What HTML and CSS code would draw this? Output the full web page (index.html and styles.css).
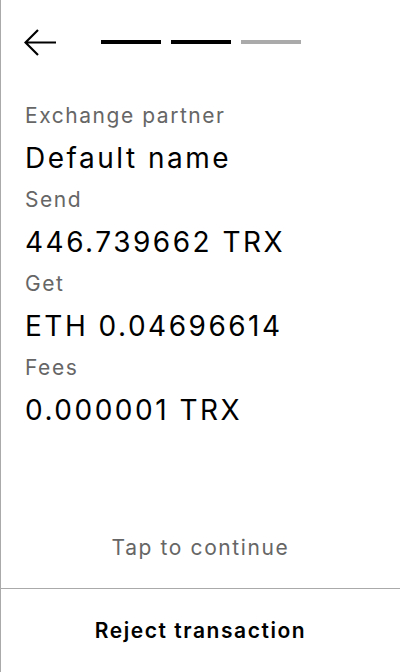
FILE: index.html
```html
<!DOCTYPE html>
<html>
<head>
<meta charset="utf-8">
<link rel="stylesheet" href="styles.css">
</head>
<body>
<div class="screen">
  <div class="top">
    <svg class="back" width="34" height="30" viewBox="0 0 34 30">
      <path d="M14 2 L1.5 14.5 L14 27 M1.5 14.5 L32 14.5" fill="none" stroke="#000" stroke-width="2.2"/>
    </svg>
    <div class="steps">
      <span class="step on"></span>
      <span class="step on"></span>
      <span class="step"></span>
    </div>
  </div>
  <div class="details">
    <div class="label">Exchange partner</div>
    <div class="value">Default name</div>
    <div class="label">Send</div>
    <div class="value">446.739662 TRX</div>
    <div class="label">Get</div>
    <div class="value">ETH 0.04696614</div>
    <div class="label">Fees</div>
    <div class="value">0.000001 TRX</div>
  </div>
  <div class="tap">Tap to continue</div>
  <div class="reject">Reject transaction</div>
</div>
</body>
</html>
```
FILE: styles.css
```css
html, body {
  margin: 0;
  padding: 0;
  background: #fff;
}
body {
  font-family: Inter, "Noto Sans", sans-serif;
  color: #000;
}
.screen {
  box-sizing: border-box;
  width: 400px;
  height: 672px;
  border-left: 1px solid #aaa;
  display: flex;
  flex-direction: column;
}
.top {
  display: flex;
  align-items: center;
  height: 86px;
  padding-left: 23px;
}
.back {
  display: block;
}
.steps {
  display: flex;
  gap: 10px;
  margin-left: 43px;
  margin-top: -2px;
}
.step {
  display: block;
  width: 60px;
  height: 4px;
  background: #aaa;
}
.step.on {
  background: #000;
}
.details {
  padding-left: 24px;
  margin-top: 12px;
}
.label {
  font-size: 21px;
  line-height: 36px;
  letter-spacing: 1.55px;
  color: #666;
}
.value {
  font-size: 28px;
  line-height: 48px;
  letter-spacing: 2.5px;
}
.tap {
  margin-top: auto;
  text-align: center;
  font-size: 21px;
  line-height: 40px;
  letter-spacing: 1.6px;
  color: #666;
  padding-bottom: 20px;
}
.reject {
  flex: none;
  box-sizing: border-box;
  border-top: 1px solid #aaa;
  height: 84px;
  display: flex;
  align-items: center;
  justify-content: center;
  font-size: 21px;
  font-weight: 600;
  letter-spacing: 1.55px;
}
```
